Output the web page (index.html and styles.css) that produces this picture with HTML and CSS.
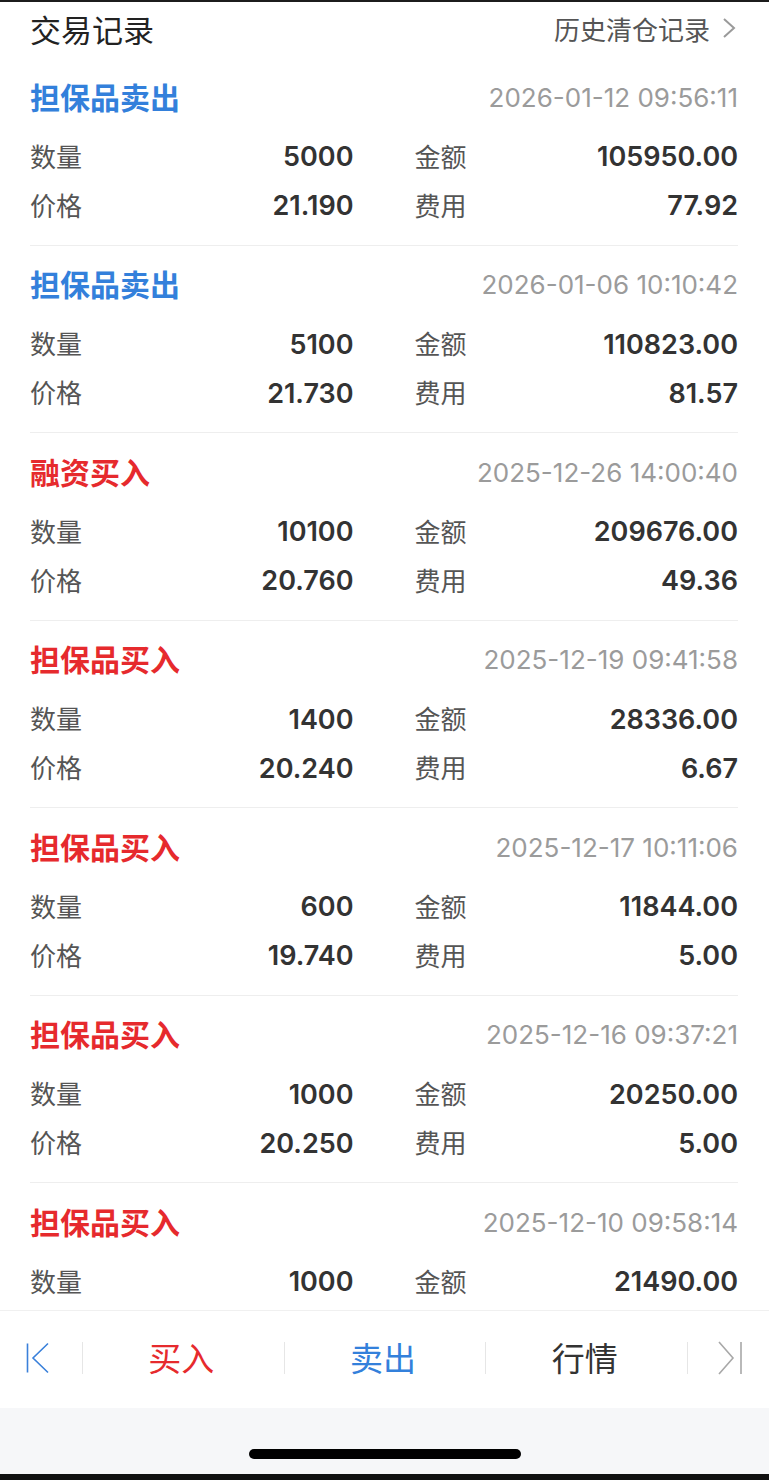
FILE: index.html
```html
<!DOCTYPE html>
<html lang="zh-CN">
<head>
  <meta charset="UTF-8">
  <meta name="viewport" content="width=device-width, initial-scale=1.0">
  <title>交易记录</title>
  <link rel="stylesheet" href="styles.css">
</head>
<body>
  <div class="page">
    <div class="header">
      <h2>交易记录</h2>
      <a class="history-link">历史清仓记录
        <svg class="chevron" width="14" height="22" viewBox="0 0 14 22"><path d="M2 2 L12 11 L2 20" fill="none" stroke="#9a9a9a" stroke-width="2"/></svg>
      </a>
    </div>

    <div class="record-list">
      <div class="record">
        <div class="record-head">
          <span class="record-type sell">担保品卖出</span>
          <span class="record-time">2026-01-12 09:56:11</span>
        </div>
        <div class="record-grid">
          <div class="cell"><span class="label">数量</span><span class="value">5000</span></div>
          <div class="cell"><span class="label">金额</span><span class="value">105950.00</span></div>
          <div class="cell"><span class="label">价格</span><span class="value">21.190</span></div>
          <div class="cell"><span class="label">费用</span><span class="value">77.92</span></div>
        </div>
      </div>

      <div class="record">
        <div class="record-head">
          <span class="record-type sell">担保品卖出</span>
          <span class="record-time">2026-01-06 10:10:42</span>
        </div>
        <div class="record-grid">
          <div class="cell"><span class="label">数量</span><span class="value">5100</span></div>
          <div class="cell"><span class="label">金额</span><span class="value">110823.00</span></div>
          <div class="cell"><span class="label">价格</span><span class="value">21.730</span></div>
          <div class="cell"><span class="label">费用</span><span class="value">81.57</span></div>
        </div>
      </div>

      <div class="record">
        <div class="record-head">
          <span class="record-type buy">融资买入</span>
          <span class="record-time">2025-12-26 14:00:40</span>
        </div>
        <div class="record-grid">
          <div class="cell"><span class="label">数量</span><span class="value">10100</span></div>
          <div class="cell"><span class="label">金额</span><span class="value">209676.00</span></div>
          <div class="cell"><span class="label">价格</span><span class="value">20.760</span></div>
          <div class="cell"><span class="label">费用</span><span class="value">49.36</span></div>
        </div>
      </div>

      <div class="record">
        <div class="record-head">
          <span class="record-type buy">担保品买入</span>
          <span class="record-time">2025-12-19 09:41:58</span>
        </div>
        <div class="record-grid">
          <div class="cell"><span class="label">数量</span><span class="value">1400</span></div>
          <div class="cell"><span class="label">金额</span><span class="value">28336.00</span></div>
          <div class="cell"><span class="label">价格</span><span class="value">20.240</span></div>
          <div class="cell"><span class="label">费用</span><span class="value">6.67</span></div>
        </div>
      </div>

      <div class="record">
        <div class="record-head">
          <span class="record-type buy">担保品买入</span>
          <span class="record-time">2025-12-17 10:11:06</span>
        </div>
        <div class="record-grid">
          <div class="cell"><span class="label">数量</span><span class="value">600</span></div>
          <div class="cell"><span class="label">金额</span><span class="value">11844.00</span></div>
          <div class="cell"><span class="label">价格</span><span class="value">19.740</span></div>
          <div class="cell"><span class="label">费用</span><span class="value">5.00</span></div>
        </div>
      </div>

      <div class="record">
        <div class="record-head">
          <span class="record-type buy">担保品买入</span>
          <span class="record-time">2025-12-16 09:37:21</span>
        </div>
        <div class="record-grid">
          <div class="cell"><span class="label">数量</span><span class="value">1000</span></div>
          <div class="cell"><span class="label">金额</span><span class="value">20250.00</span></div>
          <div class="cell"><span class="label">价格</span><span class="value">20.250</span></div>
          <div class="cell"><span class="label">费用</span><span class="value">5.00</span></div>
        </div>
      </div>

      <div class="record">
        <div class="record-head">
          <span class="record-type buy">担保品买入</span>
          <span class="record-time">2025-12-10 09:58:14</span>
        </div>
        <div class="record-grid">
          <div class="cell"><span class="label">数量</span><span class="value">1000</span></div>
          <div class="cell"><span class="label">金额</span><span class="value">21490.00</span></div>
        </div>
      </div>
    </div>

    <div class="tab-bar">
      <div class="tab-item first">
        <svg width="24" height="32" viewBox="0 0 24 32"><path d="M1.5 1.5 V30.5 M22 1.5 L7 16 L22 30.5" fill="none" stroke="#3a80da" stroke-width="1.6"/></svg>
      </div>
      <div class="tab-item"><span class="tab-text buy">买入</span></div>
      <div class="tab-item"><span class="tab-text sell">卖出</span></div>
      <div class="tab-item"><span class="tab-text">行情</span></div>
      <div class="tab-item last">
        <svg width="26" height="34" viewBox="0 0 26 34"><path d="M2 1 L16 17 L2 33 M24 1 V33" fill="none" stroke="#a8a8a8" stroke-width="1.6"/></svg>
      </div>
    </div>

    <div class="home-area">
      <div class="home-indicator"></div>
    </div>
  </div>
</body>
</html>
```

FILE: styles.css
```css
* {
  margin: 0;
  padding: 0;
  box-sizing: border-box;
}
body {
  font-family: 'Inter', 'Noto Sans CJK SC', sans-serif;
  background: #ffffff;
  color: #333;
}
.page {
  height: 1480px;
  display: flex;
  flex-direction: column;
  border-top: 2px solid #1c1c1c;
  border-bottom: 6px solid #111;
  overflow: hidden;
}
.header {
  height: 56px;
  flex-shrink: 0;
  display: flex;
  justify-content: space-between;
  align-items: center;
  padding: 0 33px 4px 30px;
}
h2 {
  font-size: 31px;
  font-weight: 400;
  color: #222;
  font-family: 'Noto Sans CJK SC', sans-serif;
}
.history-link {
  display: flex;
  align-items: center;
  gap: 12px;
  font-size: 26px;
  color: #555;
  font-family: 'Noto Sans CJK SC', sans-serif;
}

/* Record list */
.record-list {
  flex: 1;
  overflow: hidden;
  padding: 0 31px 0 30px;
}
.record {
  padding: 19px 0 14.5px;
  border-bottom: 1px solid #eeeeee;
}
.record-head {
  height: 40px;
  display: flex;
  justify-content: space-between;
  align-items: center;
  margin-bottom: 15px;
}
.record-type {
  font-family: 'Noto Sans CJK SC', sans-serif;
  font-size: 30px;
  font-weight: 700;
  padding-bottom: 3px;
}
.record-type.sell {
  color: #3380db;
}
.record-type.buy {
  color: #e62a2d;
}
.record-time {
  font-size: 26px;
  color: #9b9b9b;
}
.record-grid {
  display: grid;
  grid-template-columns: 1fr 1fr;
  column-gap: 61px;
}
.cell {
  height: 49px;
  display: flex;
  justify-content: space-between;
  align-items: center;
}
.label {
  font-family: 'Noto Sans CJK SC', sans-serif;
  font-size: 26px;
  color: #555;
  padding-bottom: 3px;
}
.value {
  font-size: 27px;
  font-weight: 600;
  color: #333;
}

/* Bottom tab bar */
.tab-bar {
  height: 98px;
  flex-shrink: 0;
  border-top: 1px solid #f0f0f0;
  padding-bottom: 3px;
  display: grid;
  grid-template-columns: 82px 1fr 1fr 1fr 82px;
  align-items: center;
}
.tab-item {
  height: 32px;
  display: flex;
  justify-content: center;
  align-items: center;
  border-left: 1px solid #e6e6e6;
}
.tab-item.first {
  border-left: none;
  justify-content: flex-start;
  padding-left: 26px;
}
.tab-item.last {
  justify-content: flex-start;
  padding-left: 29px;
}
.tab-text {
  font-family: 'Noto Sans CJK SC', sans-serif;
  font-size: 33px;
  color: #333;
  margin-right: 4px;
  padding-bottom: 3px;
}
.tab-text.buy {
  color: #e62a2d;
}
.tab-text.sell {
  color: #3380db;
}
.home-area {
  height: 66px;
  flex-shrink: 0;
  background: #f6f7f9;
  display: flex;
  justify-content: center;
  align-items: flex-end;
  padding-bottom: 15px;
}
.home-indicator {
  width: 272px;
  height: 10px;
  border-radius: 5px;
  background: #000;
}
```
